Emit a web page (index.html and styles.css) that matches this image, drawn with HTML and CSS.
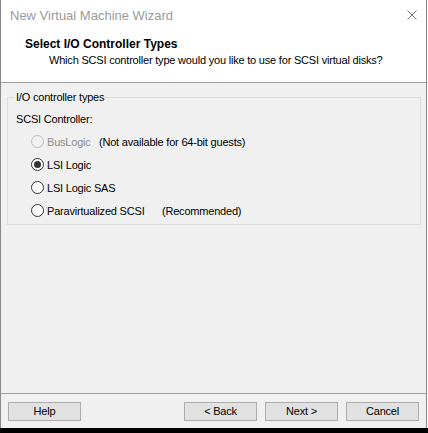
FILE: index.html
```html
<!DOCTYPE html>
<html>
<head>
<meta charset="utf-8">
<title>New Virtual Machine Wizard</title>
<link rel="stylesheet" href="styles.css">
</head>
<body>
<div class="screen">
  <div class="window">
    <div class="titlebar">
      <span class="title">New Virtual Machine Wizard</span>
      <svg class="close" width="10" height="10" viewBox="0 0 10 10"><path d="M0.5 0.5 L9.5 9.5 M9.5 0.5 L0.5 9.5" stroke="#7a7a7a" stroke-width="1" fill="none"/></svg>
    </div>
    <div class="header">
      <div class="h-title">Select I/O Controller Types</div>
      <div class="h-sub">Which SCSI controller type would you like to use for SCSI virtual disks?</div>
    </div>
    <div class="body">
      <fieldset class="group">
        <legend>I/O controller types</legend>
        <div class="group-inner">
          <div class="row label-row">SCSI Controller:</div>
          <div class="row radio-row disabled">
            <span class="radio"></span><span class="rlabel w-bus">BusLogic</span><span class="note">(Not available for 64-bit guests)</span>
          </div>
          <div class="row radio-row">
            <span class="radio checked"></span><span class="rlabel">LSI Logic</span>
          </div>
          <div class="row radio-row">
            <span class="radio"></span><span class="rlabel">LSI Logic SAS</span>
          </div>
          <div class="row radio-row">
            <span class="radio"></span><span class="rlabel w-para">Paravirtualized SCSI</span><span class="note">(Recommended)</span>
          </div>
        </div>
      </fieldset>
    </div>
    <div class="footer">
      <button class="btn">Help</button>
      <div class="spacer"></div>
      <button class="btn">&lt; Back</button>
      <button class="btn">Next &gt;</button>
      <button class="btn">Cancel</button>
    </div>
  </div>
</div>
</body>
</html>
```
FILE: styles.css
```css
html, body {
  margin: 0;
  padding: 0;
  background: #000;
}
body {
  width: 428px;
  height: 433px;
  overflow: hidden;
  font-family: "Liberation Sans", Arial, sans-serif;
  font-size: 11px;
  letter-spacing: -0.2px;
  color: #000;
}
.screen {
  width: 428px;
  height: 428px;
  background: #fff;
}
.window {
  width: 425px;
  height: 428px;
  border-left: 1px solid #8a8a8a;
  border-right: 1px solid #8a8a8a;
  display: flex;
  flex-direction: column;
  background: #f0f0f0;
}
.titlebar {
  height: 30px;
  background: #fff;
  display: flex;
  align-items: center;
  padding: 0 9px 0 9px;
}
.title {
  color: #9a9a9a;
  font-size: 13px;
  letter-spacing: 0;
  flex: 1;
}
.close {
  display: block;
}
.header {
  background: #fff;
  border-bottom: 1px solid #a0a0a0;
  box-sizing: border-box;
  height: 53px;
}
.h-title {
  font-weight: bold;
  font-size: 12px;
  letter-spacing: 0;
  padding-left: 24px;
  padding-top: 7px;
  line-height: 14px;
}
.h-sub {
  padding-left: 48px;
  padding-top: 2px;
  line-height: 14px;
  white-space: nowrap;
}
.body {
  flex: 1;
  padding: 7px 6px 0 6px;
  border-bottom: 1px solid #a0a0a0;
}
.group {
  margin: 0;
  padding: 0 0 2px 0;
  border: 1px solid #dcdcdc;
  width: 414px;
  box-sizing: border-box;
  min-width: 0;
}
.group legend {
  margin-left: 7px;
  padding: 0 1px;
  line-height: 14px;
}
.group-inner {
  padding: 3px 0 0 8px;
}
.row {
  height: 23px;
  display: flex;
  align-items: center;
}
.radio-row {
  padding-left: 15px;
}
.radio {
  width: 13px;
  height: 13px;
  box-sizing: border-box;
  border: 1px solid #333;
  border-radius: 50%;
  background: #fff;
  display: flex;
  align-items: center;
  justify-content: center;
  margin-right: 3px;
  flex: none;
}
.radio.checked::after {
  content: "";
  width: 7px;
  height: 7px;
  border-radius: 50%;
  background: #333;
}
.disabled .radio {
  border-color: #bcbcbc;
  background: #f0f0f0;
}
.disabled .rlabel {
  color: #8d8d8d;
}
.w-bus {
  width: 52px;
}
.w-para {
  width: 115px;
}
.footer {
  height: 34px;
  display: flex;
  align-items: flex-start;
  padding: 8px 7px 0 7px;
  box-sizing: border-box;
  gap: 8px;
}
.spacer {
  flex: 1;
}
.btn {
  width: 73px;
  height: 19px;
  margin: 0;
  padding: 0;
  border: 1px solid #adadad;
  background: #e1e1e1;
  font-family: "Liberation Sans", Arial, sans-serif;
  font-size: 11px;
  letter-spacing: -0.2px;
  color: #000;
  line-height: 17px;
}
```
